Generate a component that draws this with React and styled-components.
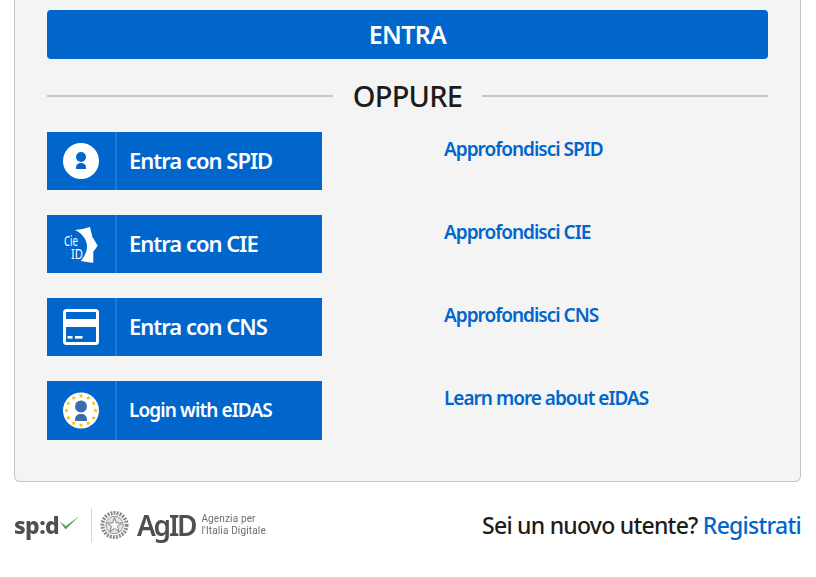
import styled, { createGlobalStyle } from 'styled-components'

const blue = '#0066cc'
const fontStack = '"Noto Sans", "Open Sans", sans-serif'

const GlobalStyle = createGlobalStyle`
  html, body {
    margin: 0;
    background: #ffffff;
    font-family: ${fontStack};
  }
  * {
    box-sizing: border-box;
  }
`

const Page = styled.div`
  width: 816px;
  height: 577px;
  padding: 0 15px 0 14px;
  overflow: hidden;
`

const Panel = styled.section`
  height: 482px;
  padding: 10px 32px 0;
  background: #f4f4f4;
  border: 1px solid #c5c5c5;
  border-top: none;
  border-radius: 0 0 6px 6px;
`

const SubmitButton = styled.button`
  display: block;
  width: 100%;
  height: 49px;
  padding: 0 0 2px;
  border: none;
  border-radius: 4px;
  background: ${blue};
  color: #ffffff;
  font-family: ${fontStack};
  font-size: 25px;
  font-weight: 600;
  letter-spacing: -0.7px;
`

const Divider = styled.div`
  display: flex;
  align-items: center;
  gap: 20px;
  height: 73px;
`

const DividerLine = styled.span`
  flex: 1;
  height: 2px;
  background: #c8c8c2;
`

const DividerText = styled.span`
  color: #1c1c1c;
  font-size: 29px;
  font-weight: 500;
  letter-spacing: -0.75px;
`

const Methods = styled.div`
  display: flex;
  flex-direction: column;
  gap: 25px;
`

const MethodRow = styled.div`
  display: grid;
  grid-template-columns: 275px 1fr;
  column-gap: 122px;
`

const MethodButton = styled.a`
  display: flex;
  align-items: center;
  height: ${({ $tall }) => ($tall ? '59px' : '58px')};
  background: ${blue};
  color: #ffffff;
`

const IconCell = styled.span`
  display: flex;
  align-items: center;
  justify-content: center;
  width: 70px;
  height: 100%;
  border-right: 2px solid #1f78d3;
`

const MethodLabel = styled.span`
  margin: 0 0 2px 12px;
  font-size: ${({ $small }) => ($small ? '19px' : '22px')};
  font-weight: 600;
  letter-spacing: ${({ $small }) => ($small ? '-0.9px' : '-1px')};
  white-space: nowrap;
`

const MoreLink = styled.a`
  margin-top: 3px;
  color: ${blue};
  font-size: 19px;
  font-weight: 600;
  line-height: 28px;
  letter-spacing: -1px;
  white-space: nowrap;
`

const Footer = styled.footer`
  display: flex;
  align-items: center;
  justify-content: space-between;
  height: 60px;
  margin-top: 13px;
`

const Logos = styled.div`
  display: flex;
  align-items: center;
  color: #4f4f4f;
  filter: blur(0.3px);
`

const SpidMark = styled.span`
  display: flex;
  align-items: center;
  width: 66px;
  font-size: 23px;
  font-weight: 800;
  letter-spacing: -0.6px;
`

const LogoRule = styled.span`
  width: 1px;
  height: 34px;
  margin: 0 8px 0 11px;
  background: #d6d6d6;
`

const AgidName = styled.span`
  margin: 0 6px 0 8px;
  font-size: 28px;
  font-weight: 600;
  line-height: 34px;
  letter-spacing: -2.2px;
`

const AgidCaption = styled.span`
  display: flex;
  flex-direction: column;
  color: #6e6e6e;
  font-family: Roboto, sans-serif;
  font-size: 10px;
  letter-spacing: 0.15px;
`

const CaptionLine = styled.span`
  display: block;
  height: 12px;
  line-height: 12px;
`

const SignUp = styled.p`
  margin: 0;
  color: #1c1c1c;
  font-size: 23px;
  font-weight: 500;
  line-height: 30px;
  letter-spacing: -0.75px;
  white-space: nowrap;
`

const SignUpLink = styled.a`
  color: ${blue};
`

const CheckSvg = styled.svg`
  flex-shrink: 0;
  margin-top: -4px;
`

function SpidIcon() {
  return (
    <svg width="36" height="36" viewBox="0 0 36 36">
      <circle cx="18" cy="18" r="18" fill="#fff" />
      <circle cx="18" cy="14" r="5" fill={blue} />
      <path d="M13 26v-1.500c0-3 2-4.500 5-4.500s5 1.500 5 4.500V26z" fill={blue} />
    </svg>
  )
}

function CieIcon() {
  return (
    <svg width="44" height="44" viewBox="0 0 44 44">
      <path
        d="M16 8C21 7.500 26 6.500 31 5L33.300 14.700 38.700 23.700 34.300 29.700 34.300 40.700C30 40.500 25.500 39.800 21.700 39 26 34 28 29 28 25 28 18 24 12 16 8z"
        fill="#fff"
      />
      <text x="5" y="23.700" fill="#fff" fontFamily={fontStack} fontSize="15" textLength="14" lengthAdjust="spacingAndGlyphs">
        Cie
      </text>
      <text x="12" y="37" fill="#fff" fontFamily={fontStack} fontSize="15" textLength="12" lengthAdjust="spacingAndGlyphs">
        ID
      </text>
    </svg>
  )
}

function CardIcon() {
  return (
    <svg width="36" height="36" viewBox="0 0 36 36">
      <rect x="1.500" y="1.500" width="33" height="33" rx="2" fill="none" stroke="#fff" strokeWidth="3" />
      <rect x="2" y="10" width="32" height="8" fill="#fff" />
      <rect x="4.500" y="27" width="5" height="2.600" fill="#fff" />
      <rect x="12" y="27" width="7.500" height="2.600" fill="#fff" />
    </svg>
  )
}

function EidasIcon() {
  const stars = Array.from({ length: 12 }, (_, i) => {
    const angle = (i * Math.PI) / 6
    return { x: 18 + 14.6 * Math.sin(angle), y: 18 - 14.6 * Math.cos(angle) }
  })
  return (
    <svg width="36" height="37" viewBox="0 0 36 36">
      <circle cx="18" cy="18" r="18" fill="#fff" />
      {stars.map((star) => (
        <path
          key={`${star.x}-${star.y}`}
          transform={`translate(${star.x} ${star.y})`}
          d="M0-2.400.7-.8 2.300-.7 1.100.4 1.500 2 0 1.100-1.500 2-1.100.4-2.300-.7-.7-.8z"
          fill="#f5c400"
        />
      ))}
      <circle cx="18" cy="14" r="6" fill="#3b6cb2" />
      <path d="M12 28.500v-1.500c0-3.500 2.500-5.500 6-5.500s6 2 6 5.500v1.500z" fill="#3b6cb2" />
    </svg>
  )
}

function SpidCheck() {
  return (
    <CheckSvg width="22" height="18" viewBox="0 0 30 22">
      <path d="M1 9 9 20 28 1 9.500 15z" fill="#55a84f" />
    </CheckSvg>
  )
}

function Emblem() {
  return (
    <svg width="29" height="32" viewBox="0 0 30 32">
      <circle cx="15" cy="16" r="12.500" fill="none" stroke="#8b8b8b" strokeWidth="4" strokeDasharray="2 1.200" />
      <circle cx="15" cy="16" r="9" fill="#e4e4e4" stroke="#777" strokeWidth="0.800" />
      <path
        d="M15 8.500 17 13.800 22.500 14 18.200 17.400 19.700 22.800 15 19.700 10.300 22.800 11.800 17.400 7.500 14 13 13.800z"
        fill="#f6f6f6"
        stroke="#666"
        strokeWidth="0.800"
      />
    </svg>
  )
}

const methods = [
  { label: 'Entra con SPID', more: 'Approfondisci SPID', Icon: SpidIcon },
  { label: 'Entra con CIE', more: 'Approfondisci CIE', Icon: CieIcon },
  { label: 'Entra con CNS', more: 'Approfondisci CNS', Icon: CardIcon },
  { label: 'Login with eIDAS', more: 'Learn more about eIDAS', Icon: EidasIcon, small: true },
]

function App() {
  return (
    <Page>
      <GlobalStyle />
      <Panel>
        <SubmitButton>ENTRA</SubmitButton>
        <Divider>
          <DividerLine />
          <DividerText>OPPURE</DividerText>
          <DividerLine />
        </Divider>
        <Methods>
          {methods.map(({ label, more, Icon, small }) => (
            <MethodRow key={label}>
              <MethodButton $tall={small}>
                <IconCell>
                  <Icon />
                </IconCell>
                <MethodLabel $small={small}>{label}</MethodLabel>
              </MethodButton>
              <MoreLink>{more}</MoreLink>
            </MethodRow>
          ))}
        </Methods>
      </Panel>
      <Footer>
        <Logos>
          <SpidMark>
            sp:d
            <SpidCheck />
          </SpidMark>
          <LogoRule />
          <Emblem />
          <AgidName>AgID</AgidName>
          <AgidCaption>
            <CaptionLine>Agenzia per</CaptionLine>
            <CaptionLine>l'Italia Digitale</CaptionLine>
          </AgidCaption>
        </Logos>
        <SignUp>
          Sei un nuovo utente? <SignUpLink>Registrati</SignUpLink>
        </SignUp>
      </Footer>
    </Page>
  )
}

export default App
